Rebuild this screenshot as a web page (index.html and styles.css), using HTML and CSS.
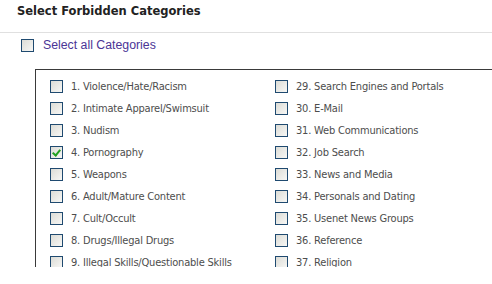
FILE: index.html
```html
<!DOCTYPE html>
<html lang="en">
<head>
  <meta charset="UTF-8">
  <title>Select Forbidden Categories</title>
  <link rel="stylesheet" href="styles.css">
</head>
<body>
  <h3 class="title">Select Forbidden Categories</h3>

  <label class="select-all">
    <span class="box"></span>
    Select all Categories
  </label>

  <div class="categories">
    <div class="col">
      <label class="item"><span class="box"></span>1. Violence/Hate/Racism</label>
      <label class="item"><span class="box"></span>2. Intimate Apparel/Swimsuit</label>
      <label class="item"><span class="box"></span>3. Nudism</label>
      <label class="item"><span class="box checked"></span>4. Pornography</label>
      <label class="item"><span class="box"></span>5. Weapons</label>
      <label class="item"><span class="box"></span>6. Adult/Mature Content</label>
      <label class="item"><span class="box"></span>7. Cult/Occult</label>
      <label class="item"><span class="box"></span>8. Drugs/Illegal Drugs</label>
      <label class="item"><span class="box"></span>9. Illegal Skills/Questionable Skills</label>
    </div>
    <div class="col">
      <label class="item"><span class="box"></span>29. Search Engines and Portals</label>
      <label class="item"><span class="box"></span>30. E-Mail</label>
      <label class="item"><span class="box"></span>31. Web Communications</label>
      <label class="item"><span class="box"></span>32. Job Search</label>
      <label class="item"><span class="box"></span>33. News and Media</label>
      <label class="item"><span class="box"></span>34. Personals and Dating</label>
      <label class="item"><span class="box"></span>35. Usenet News Groups</label>
      <label class="item"><span class="box"></span>36. Reference</label>
      <label class="item"><span class="box"></span>37. Religion</label>
    </div>
  </div>
</body>
</html>
```

FILE: styles.css
```css
body { margin: 0; background: #fff; font-family: "DejaVu Sans", sans-serif; }

.title { margin: 0; padding: 4px 0 0 17px; height: 28px; border-bottom: 1px solid #e0e0e0;
  font-size: 11.5px; font-weight: bold; color: #222; line-height: 14px; }

.select-all { display: flex; align-items: center; gap: 9px; margin: 5px 0 0 21px; height: 14px;
  font-family: "Liberation Sans", Arial, sans-serif; font-size: 12.3px; color: #4b3596; }

.box { display: inline-block; width: 11px; height: 11px; border: 1px solid #1f4a70;
  background: linear-gradient(135deg, #dcdcd6, #f7f7f5); flex: none; position: relative; }
.box.checked::after { content: ""; position: absolute; left: 3px; top: 1px; width: 3px; height: 6px;
  border: solid #21a121; border-width: 0 2px 2px 0; transform: rotate(40deg); }

.categories { display: grid; grid-template-columns: 225px 1fr; margin: 17px 0 0 35px;
  height: 198px; overflow: hidden; border-top: 1px solid #3a3a3a; border-left: 1px solid #3a3a3a;
  padding: 5px 0 0 14px; box-sizing: border-box; }

.item { display: flex; align-items: center; gap: 8px; height: 22px;
  font-family: "DejaVu Sans Condensed", "DejaVu Sans", sans-serif; font-stretch: condensed;
  font-size: 11px; letter-spacing: -0.2px; color: #4d4d4d; white-space: nowrap; }
```
